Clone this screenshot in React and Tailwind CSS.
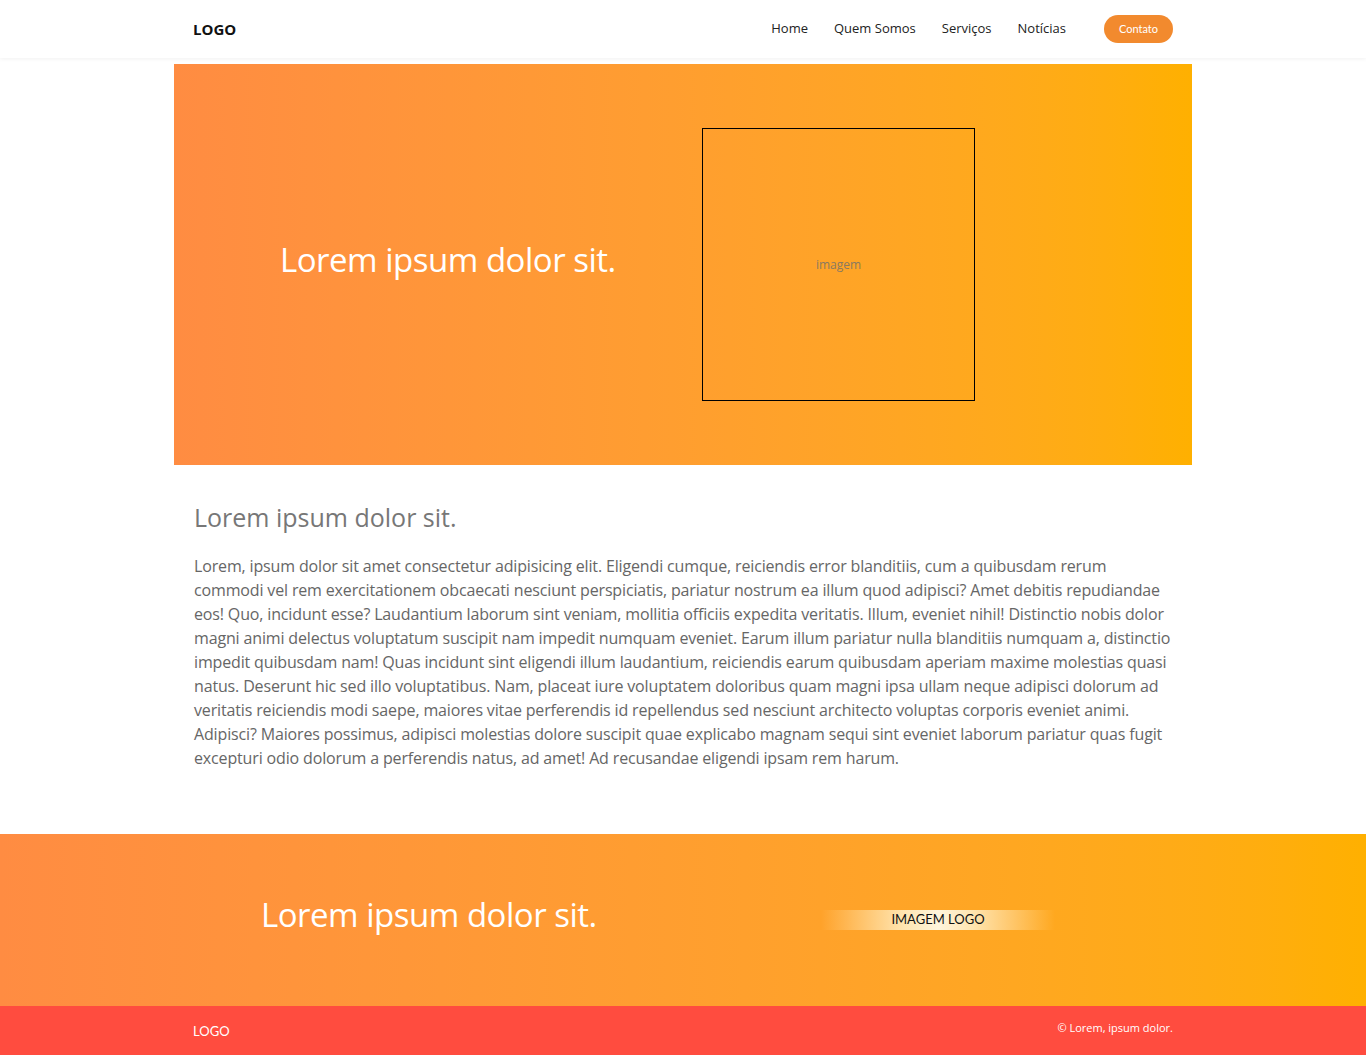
const heading = { fontFamily: '"Open Sans", "Noto Sans", sans-serif' }

function Header() {
  return (
    <header className="relative z-10 h-[58px] bg-white shadow-[0_1px_4px_rgba(0,0,0,0.06)]">
      <div className="mx-auto flex h-full w-[1018px] items-center justify-between px-[19px]">
        <span className="text-[15px] font-bold text-[#111]" style={{ fontFamily: '"Open Sans", sans-serif' }}>
          LOGO
        </span>
        <nav className="flex items-center text-[13px] text-[#222]" style={heading}>
          <a className="mr-[26px]">Home</a>
          <a className="mr-[26px]">Quem Somos</a>
          <a className="mr-[26px]">Serviços</a>
          <a className="mr-[38px]">Notícias</a>
          <a
            className="flex h-[28px] w-[69px] items-center justify-center rounded-full bg-[#f28a2e] text-[11px] text-white"
            style={{ fontFamily: 'Lato, sans-serif' }}
          >
            Contato
          </a>
        </nav>
      </div>
    </header>
  )
}

function Hero() {
  return (
    <section className="mx-auto mt-[6px] flex h-[401px] w-[1018px] items-center bg-linear-to-r from-[#ff8c42] to-[#ffb000] pl-[106px]">
      <h1 className="mb-[10px] w-[336px] whitespace-nowrap text-[33px] tracking-[-0.015em] text-white" style={heading}>
        Lorem ipsum dolor sit.
      </h1>
      <div className="ml-[86px] flex h-[273px] w-[273px] items-center justify-center border border-black">
        <span className="text-[12px] text-[#8a7a60]" style={{ fontFamily: '"Open Sans", sans-serif' }}>
          imagem
        </span>
      </div>
    </section>
  )
}

function Content() {
  return (
    <section className="mx-auto w-[1018px] px-[20px] pt-[35px] pb-[64px]">
      <h2 className="text-[25px] leading-[34px] text-[#777]" style={heading}>
        Lorem ipsum dolor sit.
      </h2>
      <p
        className="mt-[20px] text-[16px] leading-[24px] tracking-[-0.15px] text-[#666]"
        style={{ fontFamily: '"Open Sans", sans-serif' }}
      >
        Lorem, ipsum dolor sit amet consectetur adipisicing elit. Eligendi cumque, reiciendis error blanditiis, cum a
        quibusdam rerum commodi vel rem exercitationem obcaecati nesciunt perspiciatis, pariatur nostrum ea illum quod
        adipisci? Amet debitis repudiandae eos! Quo, incidunt esse? Laudantium laborum sint veniam, mollitia officiis
        expedita veritatis. Illum, eveniet nihil! Distinctio nobis dolor magni animi delectus voluptatum suscipit nam
        impedit numquam eveniet. Earum illum pariatur nulla blanditiis numquam a, distinctio impedit quibusdam nam! Quas
        incidunt sint eligendi illum laudantium, reiciendis earum quibusdam aperiam maxime molestias quasi natus.
        Deserunt hic sed illo voluptatibus. Nam, placeat iure voluptatem doloribus quam magni ipsa ullam neque adipisci
        dolorum ad veritatis reiciendis modi saepe, maiores vitae perferendis id repellendus sed nesciunt architecto
        voluptas corporis eveniet animi. Adipisci? Maiores possimus, adipisci molestias dolore suscipit quae explicabo
        magnam sequi sint eveniet laborum pariatur quas fugit excepturi odio dolorum a perferendis natus, ad amet! Ad
        recusandae eligendi ipsam rem harum.
      </p>
    </section>
  )
}

function Banner() {
  return (
    <section className="h-[172px] bg-linear-to-r from-[#ff8c42] to-[#ffb000]">
      <div className="mx-auto flex h-full w-[1018px] items-center pl-[87px]">
        <h2 className="mb-[10px] w-[336px] whitespace-nowrap text-[33px] tracking-[-0.015em] text-white" style={heading}>
          Lorem ipsum dolor sit.
        </h2>
        <div
          className="ml-[224px] flex h-[20px] w-[234px] items-center justify-center bg-[linear-gradient(90deg,rgba(255,255,255,0)_0%,rgba(255,235,190,0.9)_35%,rgba(255,245,220,1)_50%,rgba(255,235,190,0.9)_65%,rgba(255,255,255,0)_100%)] text-[13px] text-[#111]"
          style={{ fontFamily: 'Lato, sans-serif' }}
        >
          IMAGEM LOGO
        </div>
      </div>
    </section>
  )
}

function Footer() {
  return (
    <footer className="h-[49px] bg-[#ff4c3f]">
      <div className="mx-auto flex h-full w-[1018px] items-center justify-between px-[19px]" style={{ fontFamily: 'Lato, sans-serif' }}>
        <span className="mt-[2px] text-[13px] text-white">LOGO</span>
        <span className="mb-[4px] text-[11px] text-white" style={{ fontFamily: '"Open Sans", sans-serif' }}>
          © Lorem, ipsum dolor.
        </span>
      </div>
    </footer>
  )
}

export default function App() {
  return (
    <div className="min-h-screen bg-white">
      <Header />
      <Hero />
      <Content />
      <Banner />
      <Footer />
    </div>
  )
}
